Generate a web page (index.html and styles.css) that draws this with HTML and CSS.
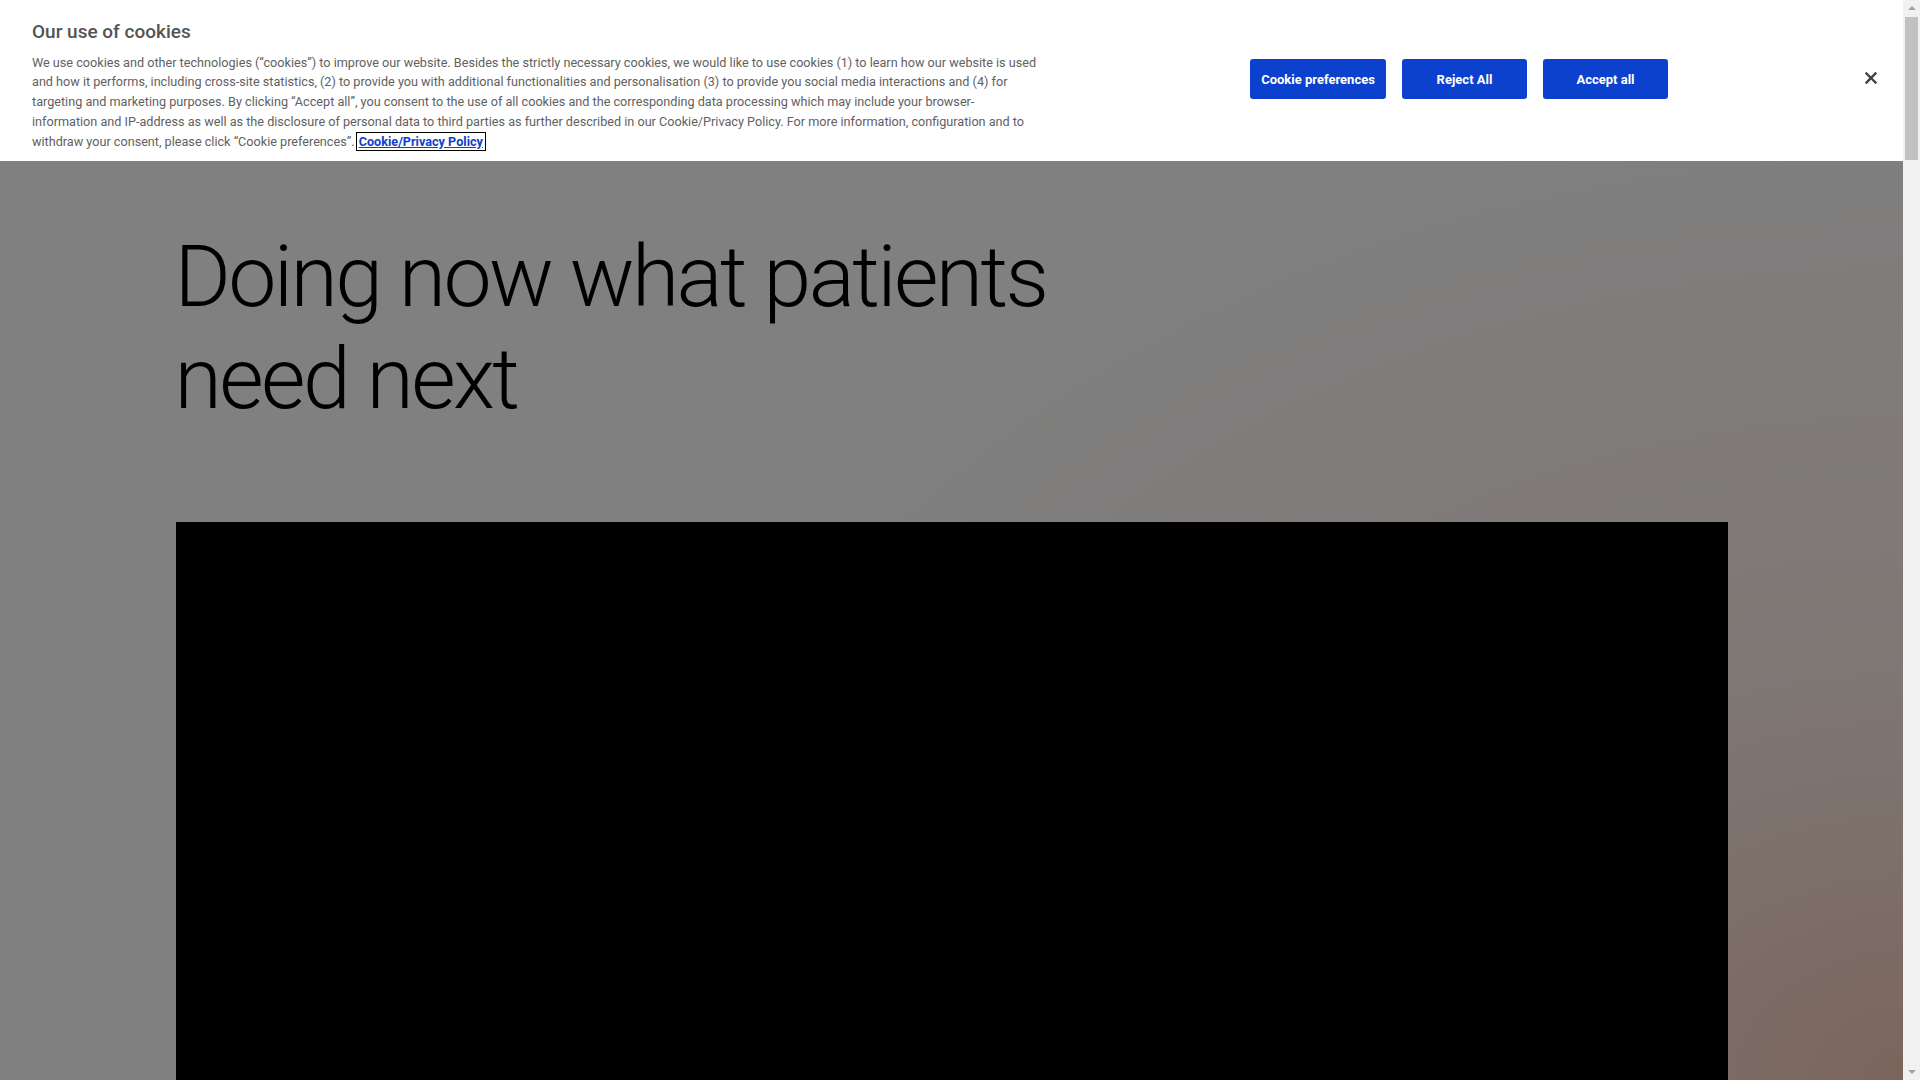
FILE: index.html
```html
<!DOCTYPE html>
<html lang="en">
<head>
<meta charset="utf-8">
<title>Doing now what patients need next</title>
<link rel="stylesheet" href="styles.css">
</head>
<body>
<main class="page">
  <section class="hero">
    <div class="container">
      <h1 class="hero-title">Doing now what patients<br>need next</h1>
      <div class="video"></div>
    </div>
  </section>
</main>

<div class="cookie-banner" role="dialog" aria-label="Our use of cookies">
  <div class="cookie-text">
    <h2 class="cookie-title">Our use of cookies</h2>
    <p class="cookie-desc">We use cookies and other technologies (“cookies”) to improve our website. Besides the strictly necessary cookies, we would like to use cookies (1) to learn how our website is used<br>and how it performs, including cross-site statistics, (2) to provide you with additional functionalities and personalisation (3) to provide you social media interactions and (4) for<br>targeting and marketing purposes. By clicking “Accept all”, you consent to the use of all cookies and the corresponding data processing which may include your browser-<br>information and IP-address as well as the disclosure of personal data to third parties as further described in our Cookie/Privacy Policy. For more information, configuration and to<br>withdraw your consent, please click “Cookie preferences”. <a class="policy-link" href="#">Cookie/Privacy Policy</a></p>
  </div>
  <div class="cookie-actions">
    <button class="btn btn-wide">Cookie preferences</button>
    <button class="btn">Reject All</button>
    <button class="btn">Accept all</button>
  </div>
  <button class="close" aria-label="Close">
    <svg width="14" height="14" viewBox="0 0 14 14"><path d="M2.5 2.5 L11.5 11.5 M11.5 2.5 L2.5 11.5" stroke="#404040" stroke-width="2.4" stroke-linecap="square"/></svg>
  </button>
</div>

<div class="scrollbar" aria-hidden="true">
  <span class="arrow arrow-up"></span>
  <span class="thumb"></span>
  <span class="arrow arrow-down"></span>
</div>
</body>
</html>
```

FILE: styles.css
```css
html, body {
  margin: 0;
  padding: 0;
}

body {
  font-family: Roboto, "Liberation Sans", Arial, sans-serif;
  background: #808080;
  padding-right: 17px;
}

.page {
  min-height: 7900px;
  background:
    radial-gradient(ellipse 70% 90% at 100% 100%, rgba(122, 98, 88, 0.9) 0%, rgba(125, 112, 107, 0.6) 40%, rgba(128, 128, 128, 0) 100%),
    #808080;
  background-attachment: fixed;
}

.container {
  max-width: 1552px;
  margin: 0 auto;
}

.hero {
  padding-top: 226px;
}

.hero-title {
  margin: 0 0 0 -1px;
  font-family: Roboto, "Liberation Sans", sans-serif;
  font-weight: 300;
  font-size: 86px;
  line-height: 102px;
  letter-spacing: -2.6px;
  color: #000;
}

.video {
  margin-top: 92px;
  width: 1552px;
  height: 873px;
  background: #000;
}

/* Cookie banner */
.cookie-banner {
  position: fixed;
  top: 0;
  left: 0;
  right: 17px;
  height: 161px;
  background: #fff;
  display: flex;
  align-items: center;
  box-sizing: border-box;
}

.cookie-text {
  width: 1250px;
  box-sizing: border-box;
  padding-left: 32px;
  flex: none;
  margin-top: 10px;
}

.cookie-title {
  margin: 0 0 9px 0;
  font-size: 19px;
  font-weight: 500;
  color: #545454;
  line-height: 24px;
}

.cookie-desc {
  margin: 0;
  width: 1060px;
  white-space: nowrap;
  font-size: 12.65px;
  line-height: 19.7px;
  color: #616161;
}

.policy-link {
  color: #0b41cd;
  font-weight: 700;
  text-decoration: underline;
  outline: 1.5px solid #000;
  outline-offset: 1px;
  padding: 0 1px;
}

.cookie-actions {
  display: flex;
  gap: 16px;
  flex: none;
  margin-bottom: 3px;
}

.btn {
  min-width: 125px;
  height: 40px;
  padding: 0 11px;
  border: none;
  border-radius: 3px;
  background: #0b41cd;
  color: #fff;
  font-family: Roboto, "Liberation Sans", sans-serif;
  font-weight: 700;
  font-size: 13px;
  cursor: pointer;
}

.btn-wide {
  min-width: 136px;
}

.close {
  margin-left: auto;
  margin-right: 18px;
  margin-bottom: 6px;
  width: 28px;
  height: 28px;
  border: none;
  background: transparent;
  display: flex;
  align-items: center;
  justify-content: center;
  padding: 0;
  cursor: pointer;
}

/* Scrollbar */
.scrollbar {
  position: fixed;
  top: 0;
  right: 0;
  width: 17px;
  height: 100vh;
  background: #f1f1f1;
  display: flex;
  flex-direction: column;
  align-items: center;
}

.arrow {
  flex: none;
  width: 0;
  height: 0;
  border-left: 4px solid transparent;
  border-right: 4px solid transparent;
}

.arrow-up {
  margin: 6px 0 6px;
  border-bottom: 4px solid #a3a3a3;
}

.thumb {
  flex: none;
  width: 13px;
  height: 143px;
  margin-top: 1px;
  background: #c1c1c1;
}

.arrow-down {
  margin-top: auto;
  margin-bottom: 6px;
  border-top: 4px solid #a3a3a3;
}
```
